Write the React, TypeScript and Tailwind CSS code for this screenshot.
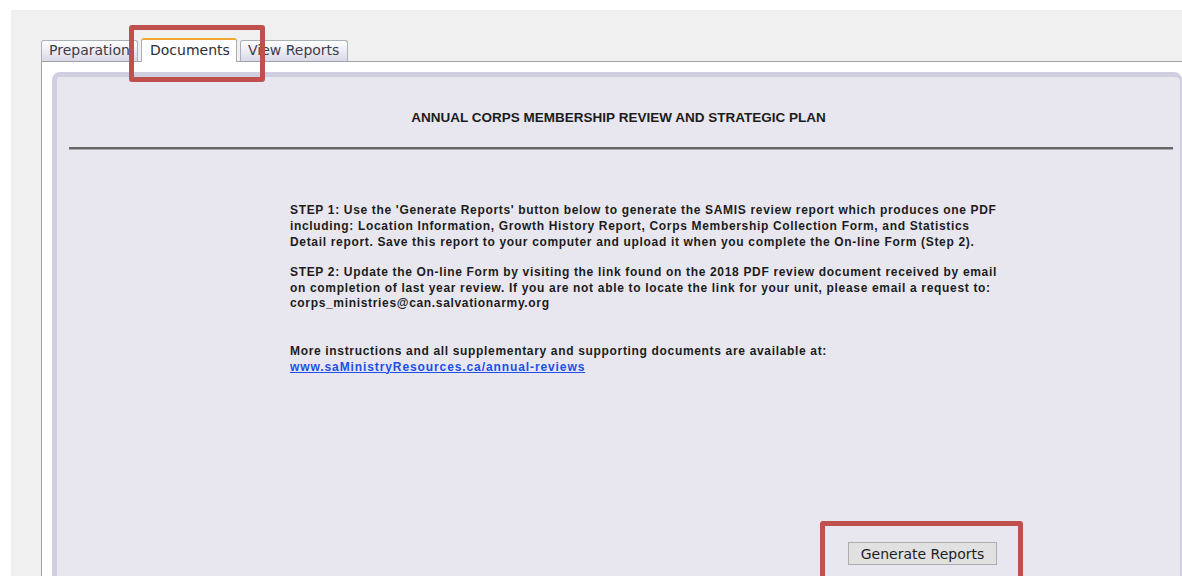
import React from "react";

const stepOne = [
  "STEP 1: Use the 'Generate Reports' button below to generate the SAMIS review report which produces one PDF",
  "including: Location Information, Growth History Report, Corps Membership Collection Form, and Statistics",
  "Detail report. Save this report to your computer and upload it when you complete the On-line Form (Step 2).",
];

const stepTwo = [
  "STEP 2: Update the On-line Form by visiting the link found on the 2018 PDF review document received by email",
  "on completion of last year review. If you are not able to locate the link for your unit, please email a request to:",
  "corps_ministries@can.salvationarmy.org",
];

function Tab({ label, active, width }: { label: string; active?: boolean; width: string }) {
  if (active) {
    return (
      <div
        className={`relative z-10 -mb-px h-[24px] ${width} overflow-hidden whitespace-nowrap rounded-t-[3px] border-x border-t-2 border-x-[#a9b0b8] border-t-[#f2a72e] bg-white pl-[8px] pt-[1px] text-[14px] leading-[18px] text-[#2e2e38]`}
      >
        {label}
      </div>
    );
  }
  return (
    <div
      className={`h-[21px] ${width} overflow-hidden whitespace-nowrap rounded-t-[3px] border-x border-t border-[#a9b0b8] bg-gradient-to-b from-white to-[#d9d9e8] pl-[7px] text-[14px] leading-[19px] text-[#3d3d4a]`}
    >
      {label}
    </div>
  );
}

export default function App() {
  return (
    <div className="relative h-[576px] w-[1182px] overflow-hidden bg-white">
      <div className="ml-[11px] mt-[10px] h-[566px] bg-[#f0f0f0] pl-[30px] pt-[28px]">
        {/* tab strip */}
        <div className="flex items-end gap-[3px] font-['DejaVu_Sans',sans-serif]">
          <Tab label="Preparation" width="w-[97px]" />
          <Tab label="Documents" width="w-[96px]" active />
          <Tab label="View Reports" width="w-[108px]" />
        </div>

        <div className="h-full border-l border-t border-[#9fa3a8] bg-white pl-[10px] pt-[10px]">
          <div className="h-full rounded-t-[8px] border-l-[5px] border-r-2 border-t-[5px] border-[#d0cfe0] bg-[#e8e7ef] font-['Liberation_Sans',Arial,sans-serif] text-[#1c1c1c]">
            <h1 className="pt-[33px] text-center text-[13.5px] font-bold leading-[16px]">
              ANNUAL CORPS MEMBERSHIP REVIEW AND STRATEGIC PLAN
            </h1>
            <div className="ml-[12px] mr-[7px] mt-[21px] h-[3px] border-t-2 border-b border-t-[#666666] border-b-[#a9a9ad]" />

            <div className="ml-[233px] mt-[52px] text-[12px] font-bold leading-[16px] tracking-[0.67px]">
              <div>
                {stepOne.map((line) => (
                  <div key={line} className="whitespace-nowrap">
                    {line}
                  </div>
                ))}
              </div>
              <div className="mt-[15px] leading-[15.5px]">
                {stepTwo.map((line) => (
                  <div key={line} className="whitespace-nowrap">
                    {line}
                  </div>
                ))}
              </div>
              <div className="mt-[31px]">
                <div className="whitespace-nowrap">
                  More instructions and all supplementary and supporting documents are available at:
                </div>
                <a href="#" className="whitespace-nowrap tracking-[0.9px] text-[#1c4fe8] underline">
                  www.saMinistryResources.ca/annual-reviews
                </a>
              </div>
            </div>

            <div className="ml-[791px] mt-[167px]">
              <button className="h-[23px] w-[149px] border border-[#adadad] bg-[#e1e1e1] font-['DejaVu_Sans',sans-serif] text-[14px] leading-[20px] text-[#1e1e1e]">
                Generate Reports
              </button>
            </div>
          </div>
        </div>
      </div>

      {/* callout frames */}
      <div className="absolute left-[129px] top-[25px] h-[57px] w-[136px] rounded-[3px] border-[5px] border-[#c0504d]" />
      <div className="absolute left-[820px] top-[521px] h-[64px] w-[203px] rounded-[3px] border-[5px] border-[#c0504d]" />
    </div>
  );
}
